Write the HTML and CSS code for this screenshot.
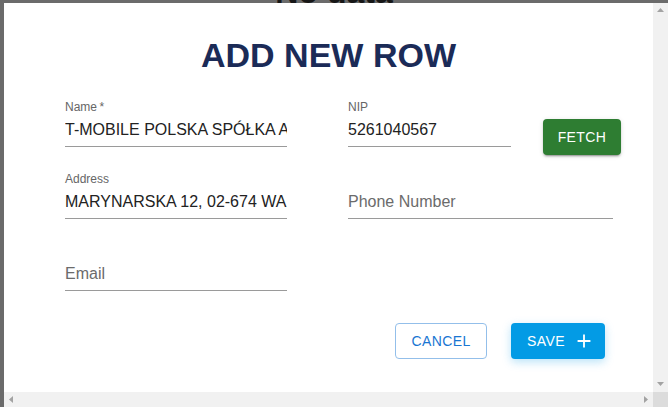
FILE: index.html
```html
<!DOCTYPE html>
<html lang="en">
<head>
<meta charset="utf-8">
<title>Add new row</title>
<link rel="stylesheet" href="styles.css">
</head>
<body>
  <main class="page">
    <h2 class="page-empty">No data</h2>
  </main>

  <div class="dialog" role="dialog" aria-labelledby="dlg-title">
    <div class="dialog-body">
      <h1 class="dialog-title" id="dlg-title">ADD NEW ROW</h1>

      <form class="form">
        <div class="field">
          <label class="field-label" for="f-name">Name&thinsp;*</label>
          <div class="field-input"><input id="f-name" type="text" value="T-MOBILE POLSKA SPÓŁKA AKCYJNA"></div>
        </div>

        <div class="nip-row">
          <div class="field field-nip">
            <label class="field-label" for="f-nip">NIP</label>
            <div class="field-input"><input id="f-nip" type="text" value="5261040567"></div>
          </div>
          <button type="button" class="btn btn-fetch">FETCH</button>
        </div>

        <div class="field">
          <label class="field-label" for="f-addr">Address</label>
          <div class="field-input"><input id="f-addr" type="text" value="MARYNARSKA 12, 02-674 WARSZAWA"></div>
        </div>

        <div class="field">
          <span class="field-label"></span>
          <div class="field-input"><input type="text" placeholder="Phone Number"></div>
        </div>

        <div class="field">
          <span class="field-label"></span>
          <div class="field-input"><input type="email" placeholder="Email"></div>
        </div>
      </form>

      <div class="actions">
        <button type="button" class="btn btn-cancel">CANCEL</button>
        <button type="button" class="btn btn-save">SAVE
          <svg class="btn-icon" viewBox="0 0 24 24" aria-hidden="true"><path d="M19 13h-6v6h-2v-6H5v-2h6V5h2v6h6v2z" fill="currentColor"/></svg>
        </button>
      </div>
    </div>

    <div class="vscroll" aria-hidden="true">
      <svg class="arrow-v" viewBox="0 0 7 4"><polygon points="3.5,0 7,4 0,4"/></svg>
      <svg class="arrow-v" viewBox="0 0 7 4"><polygon points="0,0 7,0 3.5,4"/></svg>
    </div>
    <div class="hscroll" aria-hidden="true">
      <svg class="arrow-h" viewBox="0 0 4 7"><polygon points="4,0 4,7 0,3.5"/></svg>
      <svg class="arrow-h" viewBox="0 0 4 7"><polygon points="0,0 4,3.5 0,7"/></svg>
    </div>
    <div class="scroll-corner" aria-hidden="true"></div>
  </div>
</body>
</html>
```

FILE: styles.css
```css
* { box-sizing: border-box; }

html, body {
  margin: 0;
  height: 100%;
}

body {
  background: #6b6b6b;
  font-family: "Liberation Sans", Arial, sans-serif;
  overflow: hidden;
}

.page-empty {
  margin: -26px 0 0;
  text-align: center;
  font-family: "Liberation Sans", Arial, sans-serif;
  font-weight: bold;
  font-size: 32px;
  line-height: 37px;
  color: #161616;
}

.dialog {
  position: fixed;
  top: 3px;
  left: 4px;
  right: 0;
  bottom: 0;
  display: grid;
  grid-template-columns: 1fr 15px;
  grid-template-rows: 1fr 15px;
  background: #fff;
}

.dialog-body {
  overflow: hidden;
  min-width: 0;
  min-height: 0;
}

/* fake classic scrollbars */
.vscroll {
  background: #f1f1f1;
  display: flex;
  flex-direction: column;
  justify-content: space-between;
  align-items: center;
  padding: 5px 0 6px;
}

.hscroll {
  background: #f1f1f1;
  display: flex;
  justify-content: space-between;
  align-items: center;
  padding: 0 5px 0 5px;
}

.scroll-corner {
  background: #dcdcdc;
}

.arrow-v {
  width: 7px;
  height: 4px;
  fill: #a3a3a3;
}

.arrow-h {
  width: 4px;
  height: 7px;
  fill: #a3a3a3;
}

.dialog-title {
  margin: 31px 0 0;
  text-align: center;
  font-family: "Liberation Sans", Arial, sans-serif;
  font-weight: bold;
  font-size: 34px;
  line-height: 42px;
  color: #1b2b57;
}

.form {
  display: grid;
  grid-template-columns: 222px 265px;
  grid-template-rows: repeat(3, 49px);
  column-gap: 61px;
  row-gap: 23px;
  margin: 22px 0 0 61px;
}

.field {
  display: flex;
  flex-direction: column;
  width: 100%;
}

.field-label {
  display: block;
  height: 16px;
  font-size: 12px;
  line-height: 18px;
  color: #666;
}

.field-input {
  height: 33px;
  border-bottom: 1px solid #9a9a9a;
  padding-top: 4px;
}

.field-input input {
  display: block;
  width: 100%;
  border: 0;
  outline: 0;
  padding: 0;
  margin: 0;
  background: transparent;
  font-family: "Liberation Sans", Arial, sans-serif;
  font-size: 16px;
  line-height: 23px;
  height: 23px;
  color: #222;
}

.field-input input::placeholder {
  color: #6b6b6b;
  opacity: 1;
}

.nip-row {
  display: flex;
  align-items: flex-start;
}

.field-nip {
  width: 163px;
  flex-shrink: 0;
}

.btn {
  display: inline-flex;
  align-items: center;
  justify-content: center;
  flex-shrink: 0;
  height: 36px;
  border-radius: 4px;
  font-family: "Liberation Sans", Arial, sans-serif;
  font-size: 14px;
  font-weight: 400;
  letter-spacing: 0.4px;
  cursor: pointer;
}

.btn-fetch {
  margin: 21px 0 0 32px;
  width: 78px;
  padding: 0;
  border: 0;
  background: #2e7d32;
  color: #fff;
  box-shadow: 0 3px 1px -2px rgba(0,0,0,.2), 0 2px 2px 0 rgba(0,0,0,.14), 0 1px 5px 0 rgba(0,0,0,.12);
}

.actions {
  display: flex;
  justify-content: flex-end;
  gap: 24px;
  margin: 32px 48px 0 0;
}

.btn-cancel {
  width: 92px;
  padding: 0;
  background: #fff;
  border: 1px solid #93bfea;
  color: #1976d2;
}

.btn-save {
  width: 94px;
  padding: 0 10px 0 16px;
  border: 0;
  background: #039be5;
  color: #fff;
  box-shadow: 0 3px 10px rgba(3,155,229,.28);
  justify-content: flex-start;
}

.btn-icon {
  width: 22px;
  height: 22px;
  margin-left: 8px;
}
```
